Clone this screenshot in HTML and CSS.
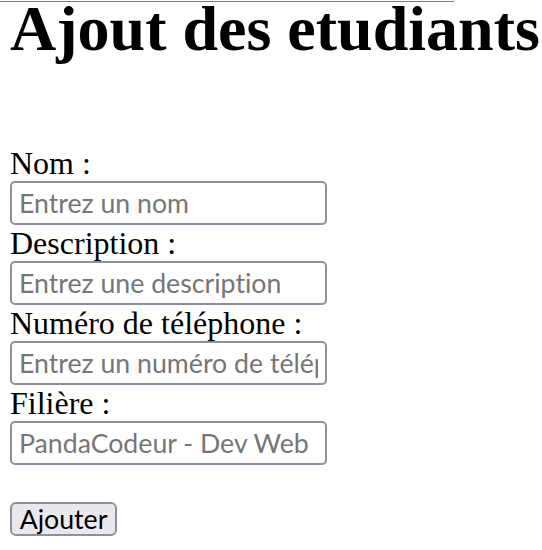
FILE: index.html
```html
<!DOCTYPE html>
<html lang="fr">
<head>
<meta charset="utf-8">
<title>Ajout des etudiants</title>
<link rel="stylesheet" href="styles.css">
</head>
<body>
<div class="topline"></div>
<main class="page">
  <h1 class="title">Ajout des etudiants</h1>
  <form class="form">
    <label class="label" for="nom">Nom :</label>
    <input class="field" id="nom" type="text" placeholder="Entrez un nom">
    <label class="label" for="desc">Description :</label>
    <input class="field" id="desc" type="text" placeholder="Entrez une description">
    <label class="label" for="tel">Numéro de téléphone :</label>
    <input class="field" id="tel" type="text" placeholder="Entrez un numéro de téléphone">
    <label class="label" for="fil">Filière :</label>
    <input class="field" id="fil" type="text" placeholder="PandaCodeur - Dev Web">
    <button class="btn" type="submit">Ajouter</button>
  </form>
</main>
</body>
</html>
```
FILE: styles.css
```css
html, body {
  margin: 0;
  padding: 0;
  background: #ffffff;
}
body {
  font-family: "Liberation Serif", "Times New Roman", serif;
  color: #000;
}
.topline {
  width: 455px;
  height: 1px;
  border-bottom: 1px solid #7a7a7a;
  border-bottom-right-radius: 3px;
}
.page {
  padding-left: 10px;
}
.title {
  margin: 0;
  font-size: 64px;
  font-weight: bold;
  line-height: 53px;
  height: 53px;
  white-space: nowrap;
}
.form {
  display: flex;
  flex-direction: column;
  align-items: flex-start;
  margin-top: 90px;
}
.label {
  display: block;
  font-size: 32px;
  line-height: 36px;
  height: 36px;
}
.field {
  box-sizing: border-box;
  width: 317px;
  height: 44px;
  margin: 0;
  padding: 0 7px;
  border: 2px solid #8f8f9d;
  border-radius: 5px;
  background: #fff;
  font-family: Lato, "Open Sans", sans-serif;
  font-size: 26.7px;
  font-variant-ligatures: none;
  color: #000;
  outline: none;
}
.field::placeholder {
  color: #767676;
  opacity: 1;
}
.btn {
  box-sizing: border-box;
  margin-top: 37px;
  width: 107px;
  height: 34px;
  padding: 0;
  border: 2px solid #8f8f9d;
  border-radius: 6px;
  background: #e9e9ed;
  font-family: Lato, "Open Sans", sans-serif;
  font-size: 26.7px;
  font-variant-ligatures: none;
  line-height: 30px;
  color: #000;
}
```
